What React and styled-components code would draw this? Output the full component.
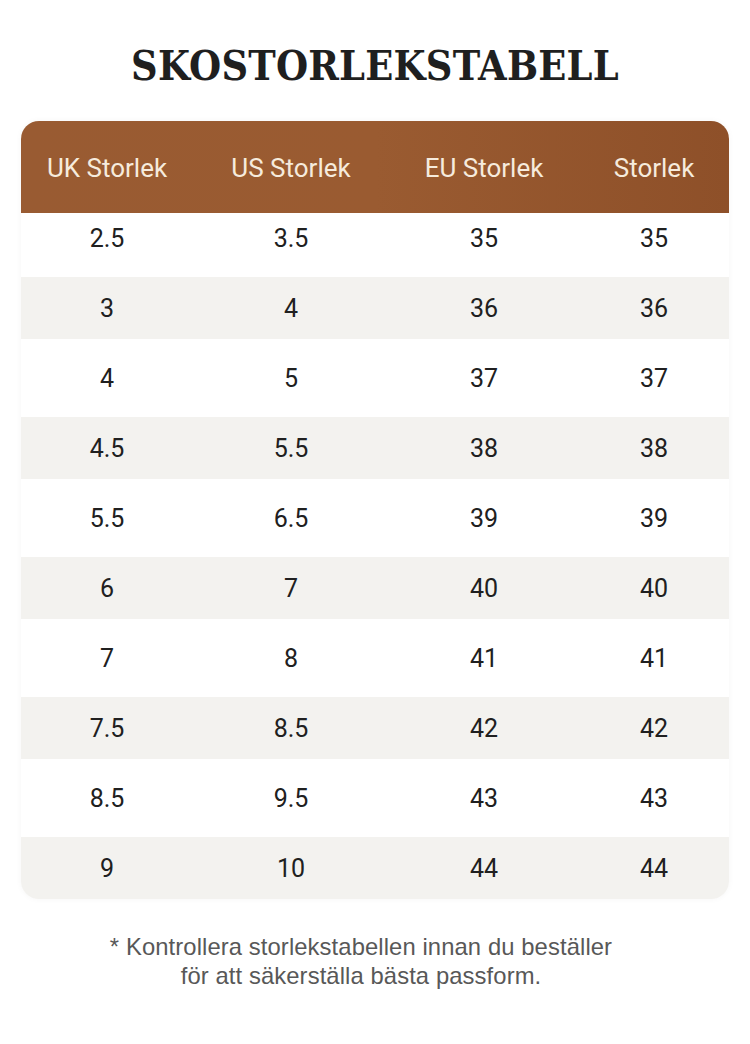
import React from "react";
import styled, { createGlobalStyle } from "styled-components";

const Global = createGlobalStyle`
  html, body { margin: 0; padding: 0; background: #ffffff; }
  body { width: 750px; height: 1044px; overflow: hidden; }
`;

const Page = styled.div`
  width: 750px;
  height: 1044px;
  display: flex;
  flex-direction: column;
  align-items: center;
  box-sizing: border-box;
  padding: 38px 21px 0 21px;
`;

const Title = styled.h1`
  margin: 0;
  height: 56px;
  line-height: 56px;
  font-family: "DejaVu Serif", "Liberation Serif", serif;
  font-stretch: condensed;
  font-weight: 700;
  font-size: 41px;
  color: #1f1f1f;
  letter-spacing: 0.2px;
`;

const Table = styled.div`
  margin-top: 27px;
  width: 708px;
  border-radius: 18px;
  overflow: hidden;
  background: #ffffff;
  box-shadow: 0 0 6px rgba(0, 0, 0, 0.04);
`;

const cols = "172px 196px 190px 150px";

const Header = styled.div`
  display: grid;
  grid-template-columns: ${cols};
  height: 92px;
  align-items: center;
  background: linear-gradient(90deg, #995b32 0%, #9a5b31 50%, #8e5029 100%);
`;

const HeadCell = styled.div`
  text-align: center;
  font-family: Roboto, "Liberation Sans", sans-serif;
  font-size: 26px;
  color: #f6ebdd;
  padding-top: 2px;
`;

const Row = styled.div`
  display: grid;
  grid-template-columns: ${cols};
  align-items: center;
  box-sizing: border-box;
  height: ${(p) => (p.$first ? "60px" : p.$last ? "66px" : "70px")};
  padding: ${(p) => (p.$first ? "0 0 10px 0" : p.$last ? "4px 0 0 0" : "4px 0")};
  background: ${(p) => (p.$shaded ? "#f3f2ef" : "#ffffff")};
  background-clip: content-box;
`;

const Cell = styled.div`
  text-align: center;
  font-family: Roboto, "Liberation Sans", sans-serif;
  font-size: 25px;
  color: #202020;
`;

const Note = styled.p`
  margin: 33px 28px 0 0;
  text-align: center;
  font-family: "Liberation Sans", Arial, sans-serif;
  font-size: 23.8px;
  letter-spacing: 0.1px;
  line-height: 29px;
  color: #585858;
`;

const headers = ["UK Storlek", "US Storlek", "EU Storlek", "Storlek"];
const rows = [
  ["2.5", "3.5", "35", "35"],
  ["3", "4", "36", "36"],
  ["4", "5", "37", "37"],
  ["4.5", "5.5", "38", "38"],
  ["5.5", "6.5", "39", "39"],
  ["6", "7", "40", "40"],
  ["7", "8", "41", "41"],
  ["7.5", "8.5", "42", "42"],
  ["8.5", "9.5", "43", "43"],
  ["9", "10", "44", "44"],
];

export default function App() {
  return (
    <>
      <Global />
      <Page>
        <Title>SKOSTORLEKSTABELL</Title>
        <Table>
          <Header>
            {headers.map((h) => (
              <HeadCell key={h}>{h}</HeadCell>
            ))}
          </Header>
          {rows.map((r, i) => (
            <Row
              key={i}
              $first={i === 0}
              $last={i === rows.length - 1}
              $shaded={i % 2 === 1}
            >
              {r.map((c, j) => (
                <Cell key={j}>{c}</Cell>
              ))}
            </Row>
          ))}
        </Table>
        <Note>
          * Kontrollera storlekstabellen innan du beställer
          <br />
          för att säkerställa bästa passform.
        </Note>
      </Page>
    </>
  );
}
